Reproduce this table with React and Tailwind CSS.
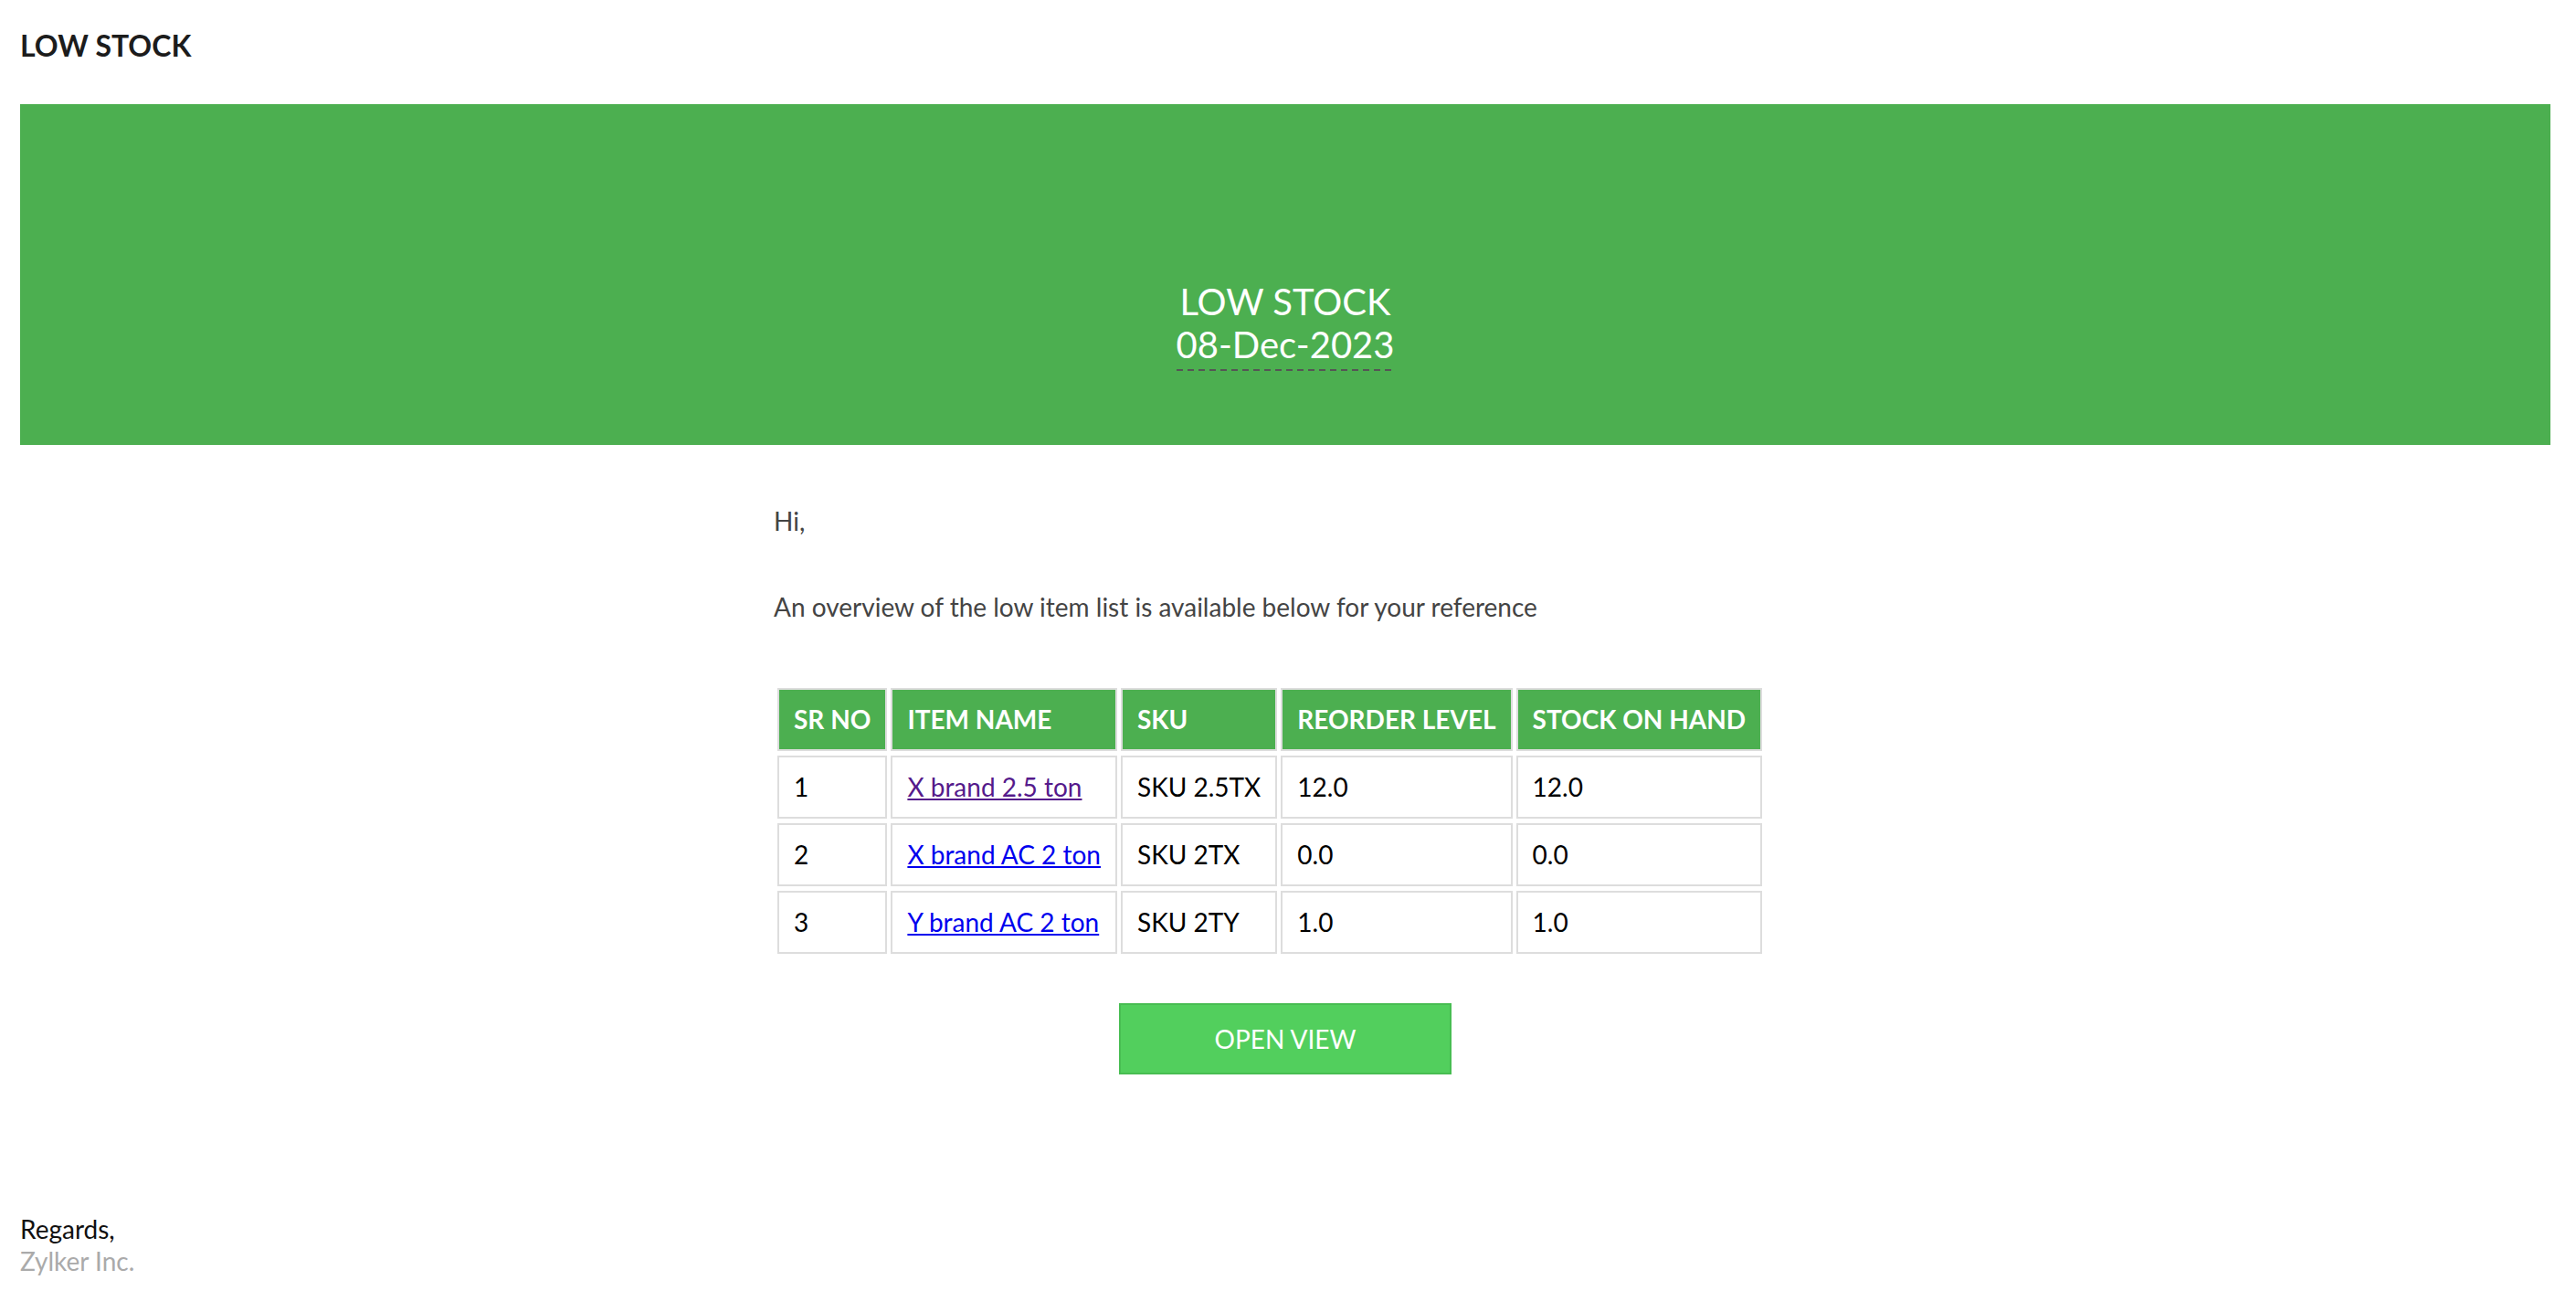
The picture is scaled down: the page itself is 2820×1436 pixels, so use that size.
import React from 'react';

const rows = [
  { sr: 1, name: 'X brand 2.5 ton', sku: 'SKU 2.5TX', reorder: '12.0', stock: '12.0', visited: true },
  { sr: 2, name: 'X brand AC 2 ton', sku: 'SKU 2TX', reorder: '0.0', stock: '0.0' },
  { sr: 3, name: 'Y brand AC 2 ton', sku: 'SKU 2TY', reorder: '1.0', stock: '1.0' },
];

const headers = ['SR NO', 'ITEM NAME', 'SKU', 'REORDER LEVEL', 'STOCK ON HAND'];

const cell = 'border-2 border-[#dddddd] px-[16px] py-[16px] leading-[33px] text-left whitespace-nowrap';

const App = () => {
  return (
    <div className="min-h-screen bg-white pl-[22px] pr-[28px] font-[family-name:Lato,sans-serif]">
      <h1 className="pt-[32px] text-[32px] leading-[36px] font-bold text-[#1c1c1c]">LOW STOCK</h1>

      {/* banner */}
      <div className="mt-[46px] h-[373px] bg-[#4caf50] pt-[193px] flex flex-col items-center text-white text-[40px] leading-[47px]">
        <div>LOW STOCK</div>
        <div className="grid">
          <span>08-Dec-2023</span>
          <svg className="w-0 min-w-full h-[2px] mt-[3px]" preserveAspectRatio="none">
            <line x1="0" y1="1" x2="100%" y2="1" stroke="#555" strokeWidth="2" strokeDasharray="7 5" />
          </svg>
        </div>
      </div>

      <div className="w-[1126px] mx-auto">
        <p className="mt-[65px] pl-[3px] text-[28px] leading-[36px] text-[#444]">Hi,</p>
        <p className="mt-[58px] pl-[3px] text-[28px] leading-[36px] text-[#444]">
          An overview of the low item list is available below for your reference
        </p>

        <table className="mt-[66px] ml-[3px] border-separate border-spacing-x-[4px] border-spacing-y-[5px] text-[28px] text-black">
          <thead>
            <tr>
              {headers.map((h) => (
                <th key={h} className={`${cell} bg-[#4caf50] text-white font-bold`}>{h}</th>
              ))}
            </tr>
          </thead>
          <tbody>
            {rows.map((r) => (
              <tr key={r.sr}>
                <td className={cell}>{r.sr}</td>
                <td className={cell}>
                  <a href="#" className={`underline ${r.visited ? 'text-[#551a8b]' : 'text-[#0000ee]'}`}>{r.name}</a>
                </td>
                <td className={cell}>{r.sku}</td>
                <td className={cell}>{r.reorder}</td>
                <td className={cell}>{r.stock}</td>
              </tr>
            ))}
          </tbody>
        </table>

        <button className="mt-[49px] mx-auto flex items-center justify-center w-[364px] h-[78px] bg-[#52cf5d] border-2 border-[#48bd52] text-white text-[28px]">
          OPEN VIEW
        </button>
      </div>

      <div className="mt-[152px] text-[28px] leading-[35px]">
        <div className="text-[#111]">Regards,</div>
        <div className="text-[#aaaaaa]">Zylker Inc.</div>
      </div>
    </div>
  );
};

export default App;
